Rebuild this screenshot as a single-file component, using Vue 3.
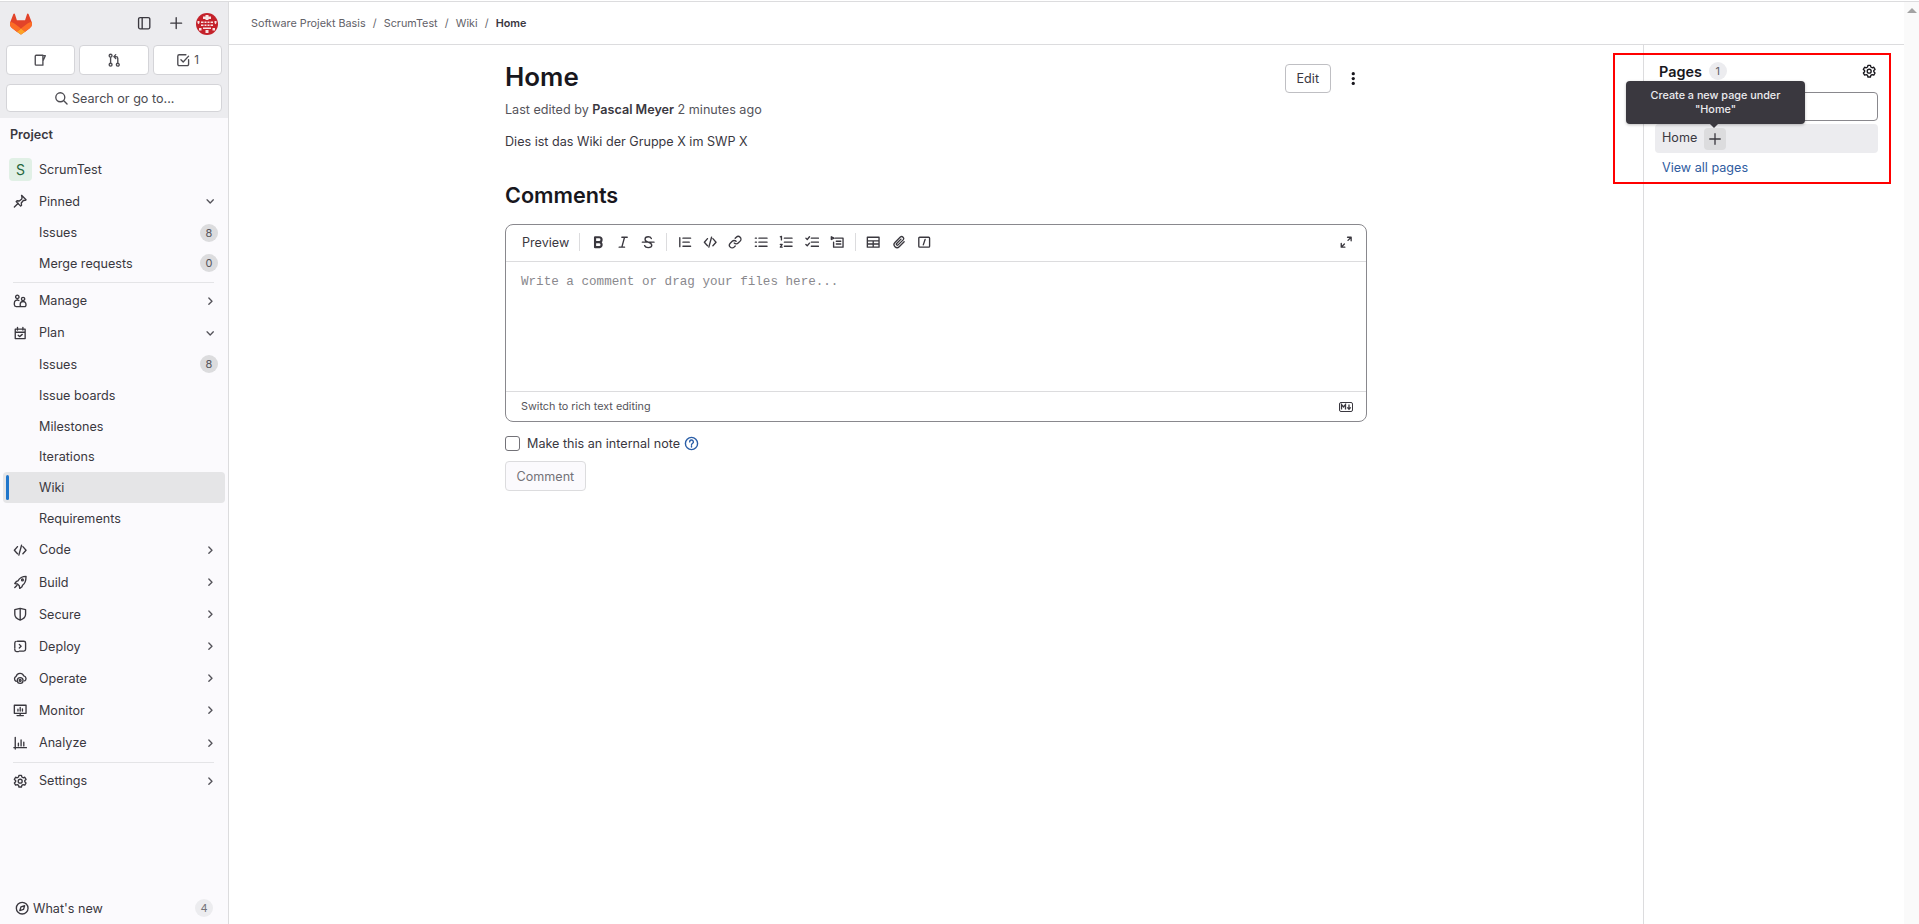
<template>
  <div class="page">
    <div class="topline"></div>
    <div class="shell">
      <aside class="sidebar">
        <div class="user-bar">
          <div class="logo-row">
            <svg class="logo" viewBox="0 0 25 24">
              <path fill="#E24329" d="m24.507 9.5-.034-.09L21.082.562a.896.896 0 0 0-1.694.091l-2.29 7.01H7.825L5.535.653a.898.898 0 0 0-1.694-.09L.451 9.411.416 9.5a6.297 6.297 0 0 0 2.09 7.278l.012.01.03.022 5.16 3.867 2.56 1.935 1.554 1.176a1.051 1.051 0 0 0 1.268 0l1.555-1.176 2.56-1.935 5.197-3.89.014-.01A6.297 6.297 0 0 0 24.507 9.5Z" />
              <path fill="#FC6D26" d="m24.507 9.5-.034-.09a11.44 11.44 0 0 0-4.56 2.051l-7.447 5.632 4.742 3.584 5.197-3.89.014-.01A6.297 6.297 0 0 0 24.507 9.5Z" />
              <path fill="#FCA326" d="m7.707 20.677 2.56 1.935 1.555 1.176a1.051 1.051 0 0 0 1.268 0l1.555-1.176 2.56-1.935-4.743-3.584-4.755 3.584Z" />
              <path fill="#FC6D26" d="M5.01 11.461a11.43 11.43 0 0 0-4.56-2.05L.416 9.5a6.297 6.297 0 0 0 2.09 7.278l.012.01.03.022 5.16 3.867 4.745-3.584-7.444-5.632Z" />
            </svg>
            <Ic n="panel" class="panel-ic" />
            <Ic n="plus" class="plus-ic" />
            <svg class="avatar" viewBox="0 0 22 22">
              <circle cx="11" cy="11" r="11" fill="#c4212a" />
              <path fill="#f7e4e4" d="M9.5 2h3v1.5H15V6h-2.5v1h-3V6H7V3.5h2.5zM5 8.5h2.5V10H5zM8.5 8.5h2V10h-2zM11.5 8.5h2V10h-2zM14.5 8.5H17V10h-2.5zM5 11.5h2.5V13H5zM8.5 11.5h2V13h-2zM11.5 11.5h2V13h-2zM14.5 11.5H17V13h-2.5zM1.5 8h2v2l-1 1.2-1-1.2zM18.5 8h2v2l-1 1.2-1-1.2zM7 14.5h8V16H7zM3 15h2.5v2.5H3zM16.5 15H19v2.5h-2.5zM9.5 17h3v3h-3z" />
            </svg>
          </div>
          <div class="counter-row">
            <button class="counter"><Ic n="mug" /></button>
            <button class="counter"><Ic n="mr" /></button>
            <button class="counter"><Ic n="todo" /><span>1</span></button>
          </div>
          <button class="search-btn"><Ic n="search" /><span>Search or go to...</span></button>
        </div>

        <div class="nav">
          <div class="nav-title">Project</div>
          <div class="project-row">
            <span class="project-avatar">S</span>
            <span>ScrumTest</span>
          </div>
          <template v-for="item in nav" :key="item.label">
            <div class="nav-row">
              <Ic :n="item.icon" class="nav-ic" />
              <span class="nav-label">{{ item.label }}</span>
              <Ic :n="item.kids ? 'down' : 'right'" class="chev" />
            </div>
            <div v-for="kid in item.kids" :key="kid.label" class="sub-row" :class="{ active: kid.active }">
              <span class="nav-label">{{ kid.label }}</span>
              <span v-if="kid.count !== undefined" class="count">{{ kid.count }}</span>
            </div>
            <div v-if="item.divider" class="nav-divider"></div>
          </template>
        </div>

        <div class="whats-new">
          <Ic n="compass" />
          <span class="nav-label">What's new</span>
          <span class="count light">4</span>
        </div>
      </aside>

      <main class="main">
        <div class="breadcrumbs">
          <span>Software Projekt Basis</span><i>/</i>
          <span>ScrumTest</span><i>/</i>
          <span>Wiki</span><i>/</i>
          <b>Home</b>
        </div>
        <div class="body">
          <section class="content">
            <div class="title-row">
              <h1>Home</h1>
              <button class="btn">Edit</button>
              <svg class="kebab" viewBox="0 0 4 12"><circle cx="2" cy="1.5" r="1.5" /><circle cx="2" cy="6" r="1.5" /><circle cx="2" cy="10.5" r="1.5" /></svg>
            </div>
            <p class="edited">Last edited by <b>Pascal Meyer</b> 2 minutes ago</p>
            <p class="wiki-text">Dies ist das Wiki der Gruppe X im SWP X</p>
            <h2>Comments</h2>

            <div class="editor">
              <div class="toolbar">
                <span class="preview">Preview</span>
                <template v-for="(group, g) in toolbar" :key="g">
                  <span class="sep"></span>
                  <span v-for="name in group" :key="name" class="tool"><Ic :n="name" :class="{ heavy: name === 'bold' }" /></span>
                </template>
                <span class="tool expand"><Ic n="expand" /></span>
              </div>
              <div class="textarea">Write a comment or drag your files here...</div>
              <div class="editor-foot">
                <span>Switch to rich text editing</span>
                <svg class="md" viewBox="0 0 14 10">
                  <rect x="0.5" y="0.5" width="13" height="9" rx="1.5" fill="none" stroke="#3a383f" />
                  <path d="M2.5 7.5v-5l2 2.5 2-2.5v5" fill="none" stroke="#3a383f" stroke-width="1.3" />
                  <path d="M10 2.5v4M8.3 5.3 10 7.3l1.7-2" fill="none" stroke="#3a383f" stroke-width="1.3" />
                </svg>
              </div>
            </div>

            <label class="note">
              <span class="check"></span>
              <span>Make this an internal note</span>
              <Ic n="help" class="help" />
            </label>
            <button class="btn disabled">Comment</button>
          </section>

          <aside class="wiki-side">
            <div class="pages-head">
              <strong>Pages</strong>
              <span class="pages-count">1</span>
              <Ic n="settings" class="pages-gear" />
            </div>
            <div class="filter"></div>
            <div class="page-row">
              <span>Home</span>
              <span class="add"><Ic n="plus" /></span>
              <div class="tooltip">Create a new page under "Home"</div>
            </div>
            <a class="all-pages">View all pages</a>
            <div class="highlight"></div>
          </aside>
        </div>
      </main>
      <div class="scroll-track"></div>
    </div>
  </div>
</template>

<script setup>
import { h } from 'vue'

const circle = (x, y, r) => `M${x - r} ${y}a${r} ${r} 0 1 0 ${2 * r} 0a${r} ${r} 0 1 0 ${-2 * r} 0`

const icons = {
  panel: 'M3.5 1.75h9a1.75 1.75 0 0 1 1.75 1.75v9a1.75 1.75 0 0 1-1.75 1.75h-9a1.75 1.75 0 0 1-1.75-1.75v-9a1.75 1.75 0 0 1 1.75-1.75zM5.75 1.75v12.5',
  plus: 'M8 2v12M2 8h12',
  mug: 'M3.5 2.5h7.5v11H3.5a1 1 0 0 1-1-1v-9a1 1 0 0 1 1-1zM11 3h2.7L11 9',
  mr: circle(4, 3, 1.6) + circle(4, 13, 1.6) + circle(12, 13, 1.6) + 'M4 4.8v6.4M12 11.2V6a2 2 0 0 0-2-2H8M9.7 1.8 7.6 4l2.1 2.2',
  todo: 'M14 7.5v5a1.5 1.5 0 0 1-1.5 1.5h-9A1.5 1.5 0 0 1 2 12.5v-9A1.5 1.5 0 0 1 3.5 2H11M5.5 7.5 8 10l6-6.5',
  search: circle(7, 7, 5) + 'M10.6 10.6 14.5 14.5',
  pin: 'M9.5 1.5l5 5-1 .5-2 .2-2.3 2.8.3 2.5-1 1-5-5 1-1 2.5.3 2.8-2.3.2-2zM5.8 10.2 1.5 14.5',
  users: circle(4.8, 3.2, 1.9) + circle(11.2, 5.5, 1.8) + 'M1.5 12v-2a3.2 3.2 0 0 1 5-2.7M8 11.5a3.2 3.2 0 0 1 6.4 0v1a1.5 1.5 0 0 1-1.5 1.5H9.5A1.5 1.5 0 0 1 8 12.5zM1.5 12a2 2 0 0 0 2 2H8',
  calendar: 'M2.5 3.5h11V14h-11zM2.5 7h11M5 1.5v3M11 1.5v3M5.8 10.3l1.5 1.5 3-2.5',
  code: 'M5 4 1.5 8 5 12M11 4l3.5 4-3.5 4M9.5 2.5l-3 11',
  rocket: 'M14.5 1.5c-4 0-7 1.5-9 5L4 7 2 9.5l3 .5 2 2 .5 3 2.5-2 .5-1.5c3.5-2 4-5.5 4-10zM2 14l2.3-2.3' + circle(10.5, 5.5, 1),
  shield: 'M8 1.5l6 1.5v5c0 3.5-3 5.5-6 6.5-3-1-6-3-6-6.5V3zM8 1.5v13',
  deploy: 'M5 2.5h7a2 2 0 0 1 2 2v7a2 2 0 0 1-2 2H7M2 10V4.5a2 2 0 0 1 1.5-1.9M7 6l2 2-2 2M2 11v1a2 2 0 0 0 2 2h2',
  operate: 'M3.5 11.5A3 3 0 0 1 3.5 6 4.5 4.5 0 0 1 12 5.5a3 3 0 0 1 1 5.5' + circle(8, 10.5, 3.2) + circle(8, 10.5, 1),
  monitor: 'M1.5 2.5h13v9h-13zM4.5 14h7M8 11.5V14M5.5 9V7M8 9V5M10.5 9V6.5',
  analyze: 'M2.5 1.5v13M1 13h14M6 11V8M9 11V4.5M12 11V7',
  settings: 'M6.6 1.5h2.8l.4 1.8 1.5.9 1.8-.6 1.4 2.4-1.4 1.3v1.4l1.4 1.3-1.4 2.4-1.8-.6-1.5.9-.4 1.8H6.6l-.4-1.8-1.5-.9-1.8.6-1.4-2.4 1.4-1.3V7.3L1.5 6l1.4-2.4 1.8.6 1.5-.9z' + circle(8, 8, 2.2),
  compass: circle(8, 8, 6.5) + 'M10.7 5.3 9.4 9.4 5.3 10.7 6.6 6.6z',
  right: 'M6.5 4.5 10 8l-3.5 3.5',
  down: 'M4.5 6.5 8 10l3.5-3.5',
  bold: 'M4.5 2.5H9a2.7 2.7 0 0 1 0 5.5H4.5zM4.5 8h5a2.8 2.8 0 0 1 0 5.5h-5z',
  italic: 'M6.5 2.5h6M3.5 13.5h6M9.5 2.5l-3 11',
  strike: 'M11.5 4C11 2.8 9.7 2 8 2 6 2 4.5 3 4.5 4.8c0 1.2 1 2.5 3.5 3.2 3 1 4 2 4 3.5S10 14 8 14c-1.8 0-3.4-.8-4-2.2M1.5 8h13',
  quote: 'M2 3v10M5.5 3.5H14M5.5 8h7M5.5 12.5H14',
  link: 'M7 9a3 3 0 0 0 4.3 0l2.2-2.2a3 3 0 0 0-4.3-4.3L8 3.7M9 7a3 3 0 0 0-4.3 0L2.5 9.2a3 3 0 0 0 4.3 4.3L8 12.3',
  ul: 'M5.5 3.5h9M5.5 8h9M5.5 12.5h9M1.5 3.5h1.2M1.5 8h1.2M1.5 12.5h1.2',
  ol: 'M6 3.5h8.5M6 8h8.5M6 12.5h8.5M1.5 2l1.2-.5v4M1.5 10.5h2l-2 3h2',
  task: 'M7 3.5h8M7 8h8M7 12.5h8M1 3.5 2.5 5 5 2M1 10.5 2.5 12 5 9',
  collapse: 'M6 3.5h8.5v10H4V8M7 7h5M7 10h5M1.5 2 4.5 3.5 1.5 5z',
  table: 'M1.5 2.5h13v11h-13zM1.5 6.5h13M8 6.5v7M1.5 10h13',
  attach: 'M13.5 7.5 8 13a3.3 3.3 0 0 1-4.7-4.7l6-6a2.2 2.2 0 0 1 3.1 3.1L6.8 11a1.1 1.1 0 0 1-1.6-1.6L10 4.6',
  slash: 'M3 2.5h10a1 1 0 0 1 1 1v9a1 1 0 0 1-1 1H3a1 1 0 0 1-1-1v-9a1 1 0 0 1 1-1zM9 5l-2 6',
  expand: 'M9.5 2.5h4v4M13.5 2.5 10 6M6.5 13.5h-4v-4M2.5 13.5 6 10',
  help: circle(8, 8, 6.5) + 'M6 6.3a2 2 0 1 1 3 1.7c-.7.4-1 .8-1 1.5M8 11v.8',
}

const Ic = (props) =>
  h('svg', { class: 'ic', viewBox: '0 0 16 16' }, [h('path', { d: icons[props.n] })])
Ic.props = ['n']

const nav = [
  {
    label: 'Pinned',
    icon: 'pin',
    kids: [
      { label: 'Issues', count: 8 },
      { label: 'Merge requests', count: 0 },
    ],
    divider: true,
  },
  { label: 'Manage', icon: 'users' },
  {
    label: 'Plan',
    icon: 'calendar',
    kids: [
      { label: 'Issues', count: 8 },
      { label: 'Issue boards' },
      { label: 'Milestones' },
      { label: 'Iterations' },
      { label: 'Wiki', active: true },
      { label: 'Requirements' },
    ],
  },
  { label: 'Code', icon: 'code' },
  { label: 'Build', icon: 'rocket' },
  { label: 'Secure', icon: 'shield' },
  { label: 'Deploy', icon: 'deploy' },
  { label: 'Operate', icon: 'operate' },
  { label: 'Monitor', icon: 'monitor' },
  { label: 'Analyze', icon: 'analyze', divider: true },
  { label: 'Settings', icon: 'settings' },
]

const toolbar = [
  ['bold', 'italic', 'strike'],
  ['quote', 'code', 'link', 'ul', 'ol', 'task', 'collapse'],
  ['table', 'attach', 'slash'],
]
</script>

<style>
html,
body {
  margin: 0;
  background: #fff;
}
</style>

<style scoped>
.page {
  height: 924px;
  overflow: hidden;
  display: flex;
  flex-direction: column;
  font-family: Inter, "Noto Sans", sans-serif;
  font-size: 12.6px;
  color: #3a383f;
  box-sizing: border-box;
  padding-top: 1px;
}

.topline {
  height: 1px;
  background: #dcdcde;
  flex: none;
}

.shell {
  flex: 1;
  display: flex;
  min-height: 0;
}

.ic {
  width: 14.4px;
  height: 14.4px;
  flex: none;
  fill: none;
  stroke: currentColor;
  stroke-width: 1.5;
  stroke-linejoin: round;
  stroke-linecap: round;
}

.heavy {
  stroke-width: 2.4;
}

button {
  font: inherit;
  color: inherit;
}

/* left nav */
.sidebar {
  width: 228px;
  flex: none;
  display: flex;
  flex-direction: column;
  background: #fbfafd;
  border-right: 1px solid #dcdcde;
}

.user-bar {
  background: #ececef;
  height: 116px;
  box-sizing: border-box;
  padding: 10px 6px 0;
  flex: none;
}

.logo-row {
  display: flex;
  align-items: center;
  height: 23px;
  padding: 0 4px;
}

.logo {
  width: 22px;
  height: 22px;
}

.panel-ic {
  margin-left: auto;
}

.plus-ic {
  margin-left: 17px;
}

.avatar {
  width: 22px;
  height: 22px;
  margin-left: 13px;
}

.counter-row {
  display: grid;
  grid-template-columns: repeat(3, 1fr);
  gap: 4px;
  margin-top: 10px;
}

.counter,
.search-btn {
  height: 30px;
  background: #fff;
  border: 1px solid #d4d4d8;
  border-radius: 4px;
  display: flex;
  align-items: center;
  justify-content: center;
  gap: 4px;
  padding: 0;
  font-size: 11.5px;
  color: #4c4b51;
}

.search-btn {
  width: 100%;
  height: 28px;
  margin-top: 9px;
  font-size: 12.6px;
}

.nav {
  padding-top: 6px;
}

.nav-title {
  height: 22px;
  line-height: 22px;
  padding-left: 10px;
  font-weight: 600;
}

.project-row {
  display: flex;
  align-items: center;
  gap: 7px;
  height: 32px;
  margin-top: 7px;
  padding-left: 9px;
}

.project-avatar {
  width: 23px;
  height: 23px;
  border-radius: 4px;
  background: #e1f0e6;
  color: #24663b;
  display: flex;
  align-items: center;
  justify-content: center;
  font-size: 14px;
}

.nav-row {
  display: flex;
  align-items: center;
  height: 32.15px;
  padding-left: 13px;
}

.nav-ic {
  margin-right: 11.6px;
}

.nav-label {
  flex: 1;
}

.chev {
  margin-right: 11px;
  color: #55545b;
}

.sub-row {
  display: flex;
  align-items: center;
  height: 30.8px;
  margin: 0 3px;
  padding: 0 7px 0 36px;
  border-radius: 4px;
  position: relative;
}

.sub-row.active {
  background: #e5e5e7;
}

.sub-row.active::before {
  content: "";
  position: absolute;
  left: 3px;
  top: 3px;
  bottom: 3px;
  width: 3px;
  border-radius: 2px;
  background: #1f75cb;
}

.count {
  width: 18px;
  height: 18px;
  border-radius: 50%;
  background: #dcdcde;
  display: flex;
  align-items: center;
  justify-content: center;
  font-size: 11px;
  color: #55545b;
}

.count.light {
  background: #ececef;
  color: #737278;
}

.nav-divider {
  height: 1px;
  background: #e4e4e7;
  margin: 3px 14px 2px 13px;
}

.whats-new {
  margin-top: auto;
  height: 32px;
  display: flex;
  align-items: center;
  gap: 4px;
  padding: 0 15px 0 14.6px;
}

/* main column */
.main {
  flex: 1;
  min-width: 0;
  display: flex;
  flex-direction: column;
}

.breadcrumbs {
  height: 43px;
  flex: none;
  box-sizing: border-box;
  border-bottom: 1px solid #dcdcde;
  display: flex;
  align-items: center;
  padding-left: 22px;
  font-size: 10.8px;
  color: #626168;
}

.breadcrumbs i {
  font-style: normal;
  margin: 0 7.1px;
}

.breadcrumbs b {
  color: #3a383f;
  font-weight: 600;
}

.body {
  flex: 1;
  display: flex;
  min-height: 0;
}

.content {
  flex: 1;
  min-width: 0;
  box-sizing: border-box;
  padding: 0 276px;
}

.title-row {
  display: flex;
  align-items: center;
  height: 36px;
  margin-top: 15px;
}

h1 {
  margin: -3px auto 0 0;
  font-size: 25.9px;
  font-weight: 600;
  color: #18171d;
}

.btn {
  height: 29px;
  padding: 0 10.5px;
  background: #fff;
  border: 1px solid #bfbfc3;
  border-radius: 4px;
  font-size: 12.6px;
}

.kebab {
  width: 4.5px;
  height: 13px;
  margin: 0 12px 0 20px;
  fill: #18171d;
}

.edited {
  margin: 4px 0 0;
  line-height: 20px;
  color: #55545b;
}

.edited b {
  font-weight: 600;
  color: #3a383f;
}

.wiki-text {
  margin: 12px 0 0;
  line-height: 20px;
}

h2 {
  margin: 29px 0 0;
  font-size: 21.6px;
  line-height: 28px;
  font-weight: 600;
  color: #18171d;
}

.editor {
  margin-top: 15px;
  height: 198px;
  box-sizing: border-box;
  border: 1px solid #89888d;
  border-radius: 8px;
  display: flex;
  flex-direction: column;
}

.toolbar {
  height: 37px;
  flex: none;
  box-sizing: border-box;
  padding: 0 12px 2px 16px;
  display: flex;
  align-items: center;
  border-bottom: 1px solid #dcdcde;
}

.preview {
  width: 52px;
}

.sep {
  width: 1px;
  height: 18px;
  background: #dcdcde;
  margin: 0 5px;
}

.tool {
  width: 25.4px;
  display: flex;
  justify-content: center;
  color: #3a383f;
}

.expand {
  margin-left: auto;
  width: 16px;
}

.textarea {
  flex: 1;
  padding: 10px 15px;
  font-family: "Liberation Mono", "DejaVu Sans Mono", monospace;
  font-size: 12.6px;
  line-height: 20px;
  color: #89888d;
}

.editor-foot {
  height: 29px;
  flex: none;
  border-top: 1px solid #dcdcde;
  display: flex;
  align-items: center;
  justify-content: space-between;
  padding: 0 13px 0 15px;
  font-size: 10.8px;
  color: #55545b;
}

.md {
  width: 14px;
  height: 10px;
}

.note {
  display: flex;
  align-items: center;
  gap: 7px;
  height: 20px;
  margin-top: 11px;
}

.check {
  width: 13px;
  height: 13px;
  border: 1px solid #737278;
  border-radius: 3px;
}

.help {
  width: 15px;
  height: 15px;
  margin-left: -3px;
  color: #2a5ea7;
}

.btn.disabled {
  display: block;
  margin-top: 8px;
  height: 30px;
  background: #fbfafd;
  border-color: #dcdcde;
  color: #737278;
}

/* wiki pages */
.wiki-side {
  width: 261px;
  flex: none;
  box-sizing: border-box;
  border-left: 1px solid #dcdcde;
  padding: 14px 26px 0 11px;
  position: relative;
}

.pages-head {
  display: flex;
  align-items: center;
  height: 24px;
  padding-left: 4px;
}

.pages-head strong {
  font-size: 14.4px;
  font-weight: 600;
  color: #18171d;
}

.pages-count {
  width: 18px;
  height: 18px;
  margin-left: 7px;
  border-radius: 50%;
  background: #ececef;
  display: flex;
  align-items: center;
  justify-content: center;
  font-size: 11px;
  color: #626168;
}

.pages-gear {
  margin-left: auto;
  margin-right: 2px;
  color: #18171d;
}

.filter {
  height: 27px;
  margin-top: 9px;
  border: 1px solid #89888d;
  border-radius: 4px;
}

.page-row {
  height: 29px;
  margin-top: 3px;
  display: flex;
  align-items: center;
  gap: 7px;
  padding-left: 7px;
  background: #ececef;
  border-radius: 4px;
  position: relative;
}

.page-row > span:first-child {
  margin-top: -3px;
}

.add {
  width: 22px;
  height: 22px;
  background: #dcdcde;
  border-radius: 4px;
  display: flex;
  align-items: center;
  justify-content: center;
}

.add .ic {
  width: 14px;
  height: 14px;
}

.tooltip {
  position: absolute;
  left: -29px;
  top: -43px;
  width: 179px;
  height: 43px;
  box-sizing: border-box;
  padding: 8px 16px 0;
  background: #3a383f;
  border-radius: 4px;
  box-shadow: 0 1px 3px rgba(0, 0, 0, 0.25);
  color: #ececef;
  font-size: 10.8px;
  font-weight: 500;
  line-height: 13.5px;
  text-align: center;
}

.tooltip::after {
  content: "";
  position: absolute;
  left: 84px;
  bottom: -4px;
  border: 4px solid transparent;
  border-top-color: #3a383f;
  border-bottom: 0;
}

.all-pages {
  display: block;
  margin-top: 5px;
  padding-left: 7px;
  line-height: 20px;
  color: #2f5ca0;
}

.highlight {
  position: absolute;
  left: -31px;
  top: 8px;
  width: 278px;
  height: 131px;
  box-sizing: border-box;
  border: 2px solid #f00;
  pointer-events: none;
}

.scroll-track {
  width: 15px;
  flex: none;
  background: #fafafa;
  display: flex;
  justify-content: center;
  padding-top: 6px;
  box-sizing: border-box;
}

.scroll-track::before {
  content: "";
  width: 0;
  height: 0;
  border: 5px solid transparent;
  border-top: 0;
  border-bottom-color: #a3a3a3;
}
</style>
